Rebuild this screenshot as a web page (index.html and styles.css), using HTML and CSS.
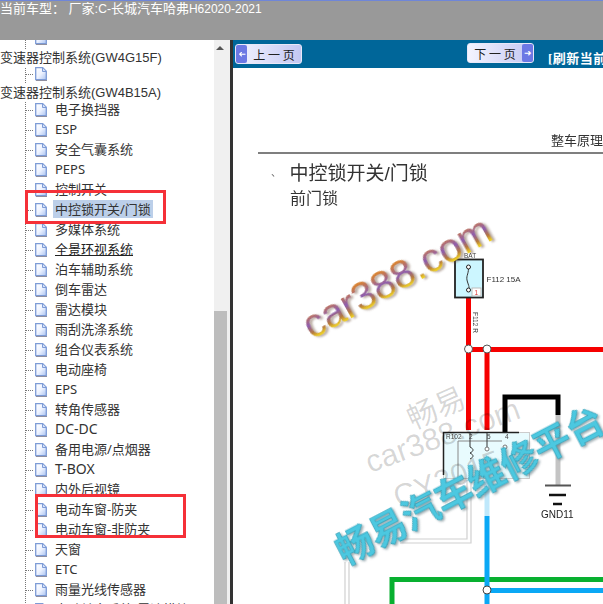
FILE: index.html
```html
<!DOCTYPE html>
<html lang="zh-CN">
  <head>
    <meta charset="UTF-8" />
    <title>维修手册</title>
    <link rel="stylesheet" href="styles.css">
  </head>
  <body>
    <svg class="defs" width="0" height="0">
      <defs>
        <linearGradient id="docFill" x1="0" y1="0" x2="1" y2="1">
          <stop offset="0" stop-color="#ffffff" />
          <stop offset="0.5" stop-color="#eef3ff" />
          <stop offset="1" stop-color="#a9c2f0" />
        </linearGradient>
        <linearGradient id="wmGrad" x1="0" y1="0" x2="0" y2="1">
          <stop offset="0.2" stop-color="#d9822e" />
          <stop offset="0.5" stop-color="#8d5cb0" />
          <stop offset="0.68" stop-color="#b5793c" />
          <stop offset="0.8" stop-color="#efd024" />
        </linearGradient>
        <symbol id="doc" viewBox="0 0 12 14">
          <path d="M.7 .7h7l3.600 3.600v8.400H.7z" fill="url(#docFill)" stroke="#7d9bd6" stroke-width="1.300" />
          <path d="M7.500 1v3.500H11" fill="#d5e1f8" stroke="#7d9bd6" />
          <path d="M1 13.500h11" stroke="#8f8f9f" />
        </symbol>
      </defs>
    </svg>

    <header class="topbar">当前车型： 厂家:<span class="en">C-</span>长城汽车哈弗<span class="en">H62020-2021</span></header>

    <div class="main">
      <aside class="side">
        <ul class="tree">
          <li class="row stub"><svg class="doc"><use href="#doc" /></svg></li>
          <li class="group">变速器控制系统(GW4G15F)</li>
          <li class="row tight"><svg class="doc"><use href="#doc" /></svg></li>
          <li class="group">变速器控制系统(GW4B15A)</li>
          <li class="row first"><svg class="doc"><use href="#doc" /></svg><span>电子换挡器</span></li>
          <li class="row"><svg class="doc"><use href="#doc" /></svg><span>ESP</span></li>
          <li class="row"><svg class="doc"><use href="#doc" /></svg><span>安全气囊系统</span></li>
          <li class="row"><svg class="doc"><use href="#doc" /></svg><span>PEPS</span></li>
          <li class="row"><svg class="doc"><use href="#doc" /></svg><span>控制开关</span></li>
          <li class="row"><svg class="doc"><use href="#doc" /></svg><span class="selected">中控锁开关/门锁</span></li>
          <li class="row"><svg class="doc"><use href="#doc" /></svg><span>多媒体系统</span></li>
          <li class="row"><svg class="doc"><use href="#doc" /></svg><span class="hovered">全景环视系统</span></li>
          <li class="row"><svg class="doc"><use href="#doc" /></svg><span>泊车辅助系统</span></li>
          <li class="row"><svg class="doc"><use href="#doc" /></svg><span>倒车雷达</span></li>
          <li class="row"><svg class="doc"><use href="#doc" /></svg><span>雷达模块</span></li>
          <li class="row"><svg class="doc"><use href="#doc" /></svg><span>雨刮洗涤系统</span></li>
          <li class="row"><svg class="doc"><use href="#doc" /></svg><span>组合仪表系统</span></li>
          <li class="row"><svg class="doc"><use href="#doc" /></svg><span>电动座椅</span></li>
          <li class="row"><svg class="doc"><use href="#doc" /></svg><span>EPS</span></li>
          <li class="row"><svg class="doc"><use href="#doc" /></svg><span>转角传感器</span></li>
          <li class="row"><svg class="doc"><use href="#doc" /></svg><span class="wide">DC-DC</span></li>
          <li class="row"><svg class="doc"><use href="#doc" /></svg><span>备用电源/点烟器</span></li>
          <li class="row"><svg class="doc"><use href="#doc" /></svg><span class="wide">T-BOX</span></li>
          <li class="row"><svg class="doc"><use href="#doc" /></svg><span>内外后视镜</span></li>
          <li class="row"><svg class="doc"><use href="#doc" /></svg><span>电动车窗-防夹</span></li>
          <li class="row"><svg class="doc"><use href="#doc" /></svg><span>电动车窗-非防夹</span></li>
          <li class="row"><svg class="doc"><use href="#doc" /></svg><span>天窗</span></li>
          <li class="row"><svg class="doc"><use href="#doc" /></svg><span>ETC</span></li>
          <li class="row"><svg class="doc"><use href="#doc" /></svg><span>雨量光线传感器</span></li>
          <li class="row"><svg class="doc"><use href="#doc" /></svg><span>电动转向系统-雷达模块</span></li>
        </ul>

        <div class="scrollbar">
          <div class="arrow"></div>
          <div class="thumb"></div>
        </div>

        <div class="mark mark-one"></div>
        <div class="mark mark-two"></div>
      </aside>

      <section class="content">
        <div class="toolbar">
          <button class="page-btn prev"><i class="cap">&#10140;</i><b>上 一 页</b></button>
          <button class="page-btn next"><b>下 一 页</b><i class="cap">&#10140;</i></button>
          <a class="refresh">[刷新当前页面]</a>
        </div>

        <div class="doc-page">
          <svg class="diagram" width="370" height="536" viewBox="233 68 370 536">
            <g class="soft">
              <text class="chapter" x="551" y="145">整车原理</text>
              <path d="M258 153H603" stroke="#555" stroke-width="1.500" />
              <text class="tick" x="271" y="176">、</text>
              <text class="title" x="289.500" y="179.500">中控锁开关/门锁</text>
              <text class="subtitle" x="290" y="204">前门锁</text>

              <!-- red feed -->
              <path d="M468.500 298V430M487 349V430M468 349.500H603" fill="none" stroke="#f60000" stroke-width="5" />
              <rect x="455" y="259.500" width="28" height="38" fill="#ccf6ff" stroke="#222" stroke-width="1.800" />
              <text class="tiny" x="464" y="258">BAT</text>
              <path d="M468.500 268c0 7-3 8-1 14s2 5 .5 9" fill="none" stroke="#333" />
              <circle cx="468.500" cy="267" r="2" fill="#fff" stroke="#222" />
              <circle cx="468.500" cy="290" r="2" fill="#fff" stroke="#222" />
              <rect x="472" y="288" width="9" height="8" fill="#fff" stroke="#bbb" />
              <text class="tiny red" x="474.500" y="295">1</text>
              <text class="label" x="486.500" y="282">F112 15A</text>
              <text class="tiny" transform="translate(473 312) rotate(90)">F112 R</text>
              <circle cx="468.500" cy="349" r="4" fill="#fff" stroke="#555" />
              <circle cx="487" cy="349" r="4" fill="#fff" stroke="#555" />

              <!-- ground -->
              <path d="M505 433V397H558V415" fill="none" stroke="#000" stroke-width="5" />
              <path d="M558 415V485" stroke="#c4c4c4" stroke-width="5" />
              <path d="M545 485.500H571" stroke="#555" stroke-width="2" />
              <path d="M549 495H566" stroke="#111" stroke-width="2.500" />
              <path d="M553 504H562" stroke="#111" stroke-width="2.500" />
              <text class="gnd" x="541" y="518">GND11</text>

              <!-- relay -->
              <rect x="443.500" y="432.500" width="86" height="46" fill="#e8fbfe" stroke="#ccc" />
              <path d="M443.500 475V432.500H519" fill="none" stroke="#222" stroke-width="1.500" />
              <path d="M458 480V441H502" fill="none" stroke="#888" />
              <path d="M470 433V447c4 2 4 4 0 6 4 2 4 4 0 6M487 433V448" fill="none" stroke="#333" />
              <circle cx="487" cy="449" r="2" fill="#fff" stroke="#777" />
              <circle cx="505" cy="447" r="2" fill="#fff" stroke="#777" />
              <text class="tiny" x="446" y="439">R102</text>
              <text class="tiny" x="469" y="439">2</text>
              <text class="tiny" x="487" y="439">5</text>
              <text class="tiny" x="505" y="439">4</text>

              <!-- lower wires -->
              <path d="M467 480V539H400M471 480V543H400M345 562V604M349 562V604" fill="none" stroke="#d0d0d0" stroke-width="1.200" />
              <path d="M392 604V579.500H603" fill="none" stroke="#08b030" stroke-width="5" />
              <path d="M487 516V604M487 590.500H603" fill="none" stroke="#0aa8f5" stroke-width="5" />
              <path d="M487 480V516" stroke="#bfe8fb" stroke-width="5" />
              <circle cx="487" cy="590" r="4" fill="#fff" stroke="#444" />
            </g>

            <!-- watermarks -->
            <g class="wm-gray">
              <text transform="translate(413 430) rotate(-24)" font-size="30">畅易</text>
              <text transform="translate(370 473) rotate(-20)" font-size="31">car388.com</text>
              <text transform="translate(398 508) rotate(-20)" font-size="31">CY2015</text>
            </g>
            <g class="wm-cyan">
              <text transform="translate(345 566) rotate(-27.500)">畅易汽车维修平台</text>
            </g>
            <g class="wm-color">
              <text transform="translate(312 340) rotate(-29)">car388.com</text>
            </g>
          </svg>
        </div>
      </section>
    </div>
  </body>
</html>
```

FILE: styles.css
```css
* {
  box-sizing: border-box;
  margin: 0;
  padding: 0;
}

html,
body {
  height: 100%;
  overflow: hidden;
}

body {
  font-family: "Noto Sans", "Noto Sans CJK SC", sans-serif;
  background-color: #fff;
  color: #333;
  display: flex;
  flex-direction: column;
}

.defs {
  position: absolute;
}

.topbar {
  height: 40px;
  flex-shrink: 0;
  background-color: #999;
  border-top: 1px solid #6f86d8;
  color: #fff;
  font-family: "Liberation Sans", "Noto Sans CJK SC", sans-serif;
  font-size: 13px;
  line-height: 16px;
  white-space: pre;
}

.en {
  font-size: 12px;
}

.main {
  flex: 1;
  display: flex;
  min-height: 0;
}

/* left tree */
.side {
  position: relative;
  width: 233px;
  flex-shrink: 0;
  display: flex;
  overflow: hidden;
  border-right: 3px solid #333;
}

.tree {
  width: 214px;
  list-style: none;
  font-size: 13px;
  background-image: linear-gradient(#777 50%, transparent 50%);
  background-size: 1px 2px;
  background-position: 25px 0;
  background-repeat: repeat-y;
}

.row {
  display: flex;
  align-items: center;
  height: 20px;
  padding-left: 35px;
  position: relative;
  white-space: nowrap;
}

.row::before {
  content: "";
  position: absolute;
  left: 26px;
  top: 10px;
  width: 8px;
  height: 1px;
  background-image: linear-gradient(90deg, #777 50%, transparent 50%);
  background-size: 2px 1px;
}

.row span {
  margin-left: 6px;
  margin-top: -3px;
  padding: 0 2px;
  line-height: 18px;
}

.row .wide {
  font-size: 14px;
}

.stub {
  height: 9px;
  align-items: flex-start;
}

.stub .doc {
  margin-top: -9px;
}

.stub::before {
  display: none;
}

.tight {
  height: 14px;
  margin-bottom: 3px;
}

.tight::before {
  top: 7px;
}

.first {
  margin-top: -2px;
}

.group {
  height: 18px;
  line-height: 18px;
  font-family: "Liberation Sans", "Noto Sans CJK SC", sans-serif;
  background-color: #fff;
  white-space: nowrap;
}

.doc {
  width: 12px;
  height: 14px;
  flex-shrink: 0;
}

.selected {
  background-color: #bccfe9;
}

.hovered {
  text-decoration: underline;
  color: #222;
}

.scrollbar {
  width: 16px;
  background-color: #f0f0f0;
  display: flex;
  flex-direction: column;
  flex-shrink: 0;
}

.arrow {
  height: 271px;
  position: relative;
}

.arrow::before {
  content: "";
  position: absolute;
  left: 2px;
  top: 6px;
  border-left: 4px solid transparent;
  border-right: 4px solid transparent;
  border-bottom: 4px solid #555;
}

.thumb {
  flex: 1;
  background-color: #bdbdbd;
  margin-right: 3px;
}

.mark {
  position: absolute;
  border: 3px solid #f53038;
}

.mark-one {
  left: 25px;
  top: 150px;
  width: 141px;
  height: 34px;
}

.mark-two {
  left: 35px;
  top: 454px;
  width: 151px;
  height: 44px;
}

/* right side */
.content {
  flex: 1;
  min-width: 0;
  display: flex;
  flex-direction: column;
  overflow: hidden;
}

.toolbar {
  height: 28px;
  flex-shrink: 0;
  background-color: #006699;
  display: flex;
  align-items: flex-start;
  padding-top: 4px;
  padding-left: 2px;
  white-space: nowrap;
}

.page-btn {
  width: 67px;
  height: 20px;
  flex-shrink: 0;
  display: flex;
  align-items: center;
  border: 1px solid #e8e8f8;
  border-radius: 3px;
  background: linear-gradient(90deg, #f4f4ff, #c3c7f2);
  color: #222;
  font-family: "Noto Sans CJK SC", sans-serif;
  font-size: 12px;
}

.page-btn b {
  flex: 1;
  font-weight: 400;
}

.prev {
  margin-right: 165px;
}

.next {
  margin-top: -1px;
}

.cap {
  width: 11px;
  height: 18px;
  background-color: #6c78e4;
  color: #fff;
  font-size: 9px;
  font-style: normal;
  line-height: 18px;
  text-align: center;
  border-radius: 2px;
}

.prev .cap {
  transform: scaleX(-1);
}

.refresh {
  margin-left: 14px;
  margin-top: 7px;
  color: #fff;
  font-family: "Liberation Serif", "Noto Sans CJK SC", serif;
  font-size: 13px;
  font-weight: bold;
  letter-spacing: 0.5px;
  line-height: 15px;
}

.doc-page {
  flex: 1;
  min-height: 0;
}

.diagram {
  display: block;
  font-family: "Liberation Sans", "Noto Sans CJK SC", sans-serif;
}

.soft {
  filter: blur(0.35px);
}

.chapter {
  font-size: 13px;
  fill: #333;
}

.tick {
  font-size: 10px;
  fill: #666;
}

.title {
  font-size: 19px;
  fill: #333;
}

.subtitle {
  font-size: 16px;
  fill: #333;
}

.label {
  font-size: 8px;
  fill: #333;
}

.tiny {
  font-size: 6.500px;
  fill: #444;
}

.red {
  fill: #d33;
}

.gnd {
  font-size: 10px;
  fill: #222;
}

.wm-gray text {
  fill: #000;
  fill-opacity: 0.16;
}

.wm-cyan text {
  font-size: 37px;
  font-weight: bold;
  fill: #4cc8e0;
  stroke: #2f9fb6;
  stroke-width: 0.6px;
  filter: drop-shadow(1px 2px 1px rgba(60, 90, 100, 0.5));
}

.wm-color text {
  font-size: 40px;
  fill: url(#wmGrad);
  filter: drop-shadow(2px 2px 1px rgba(110, 80, 60, 0.5));
}
```
